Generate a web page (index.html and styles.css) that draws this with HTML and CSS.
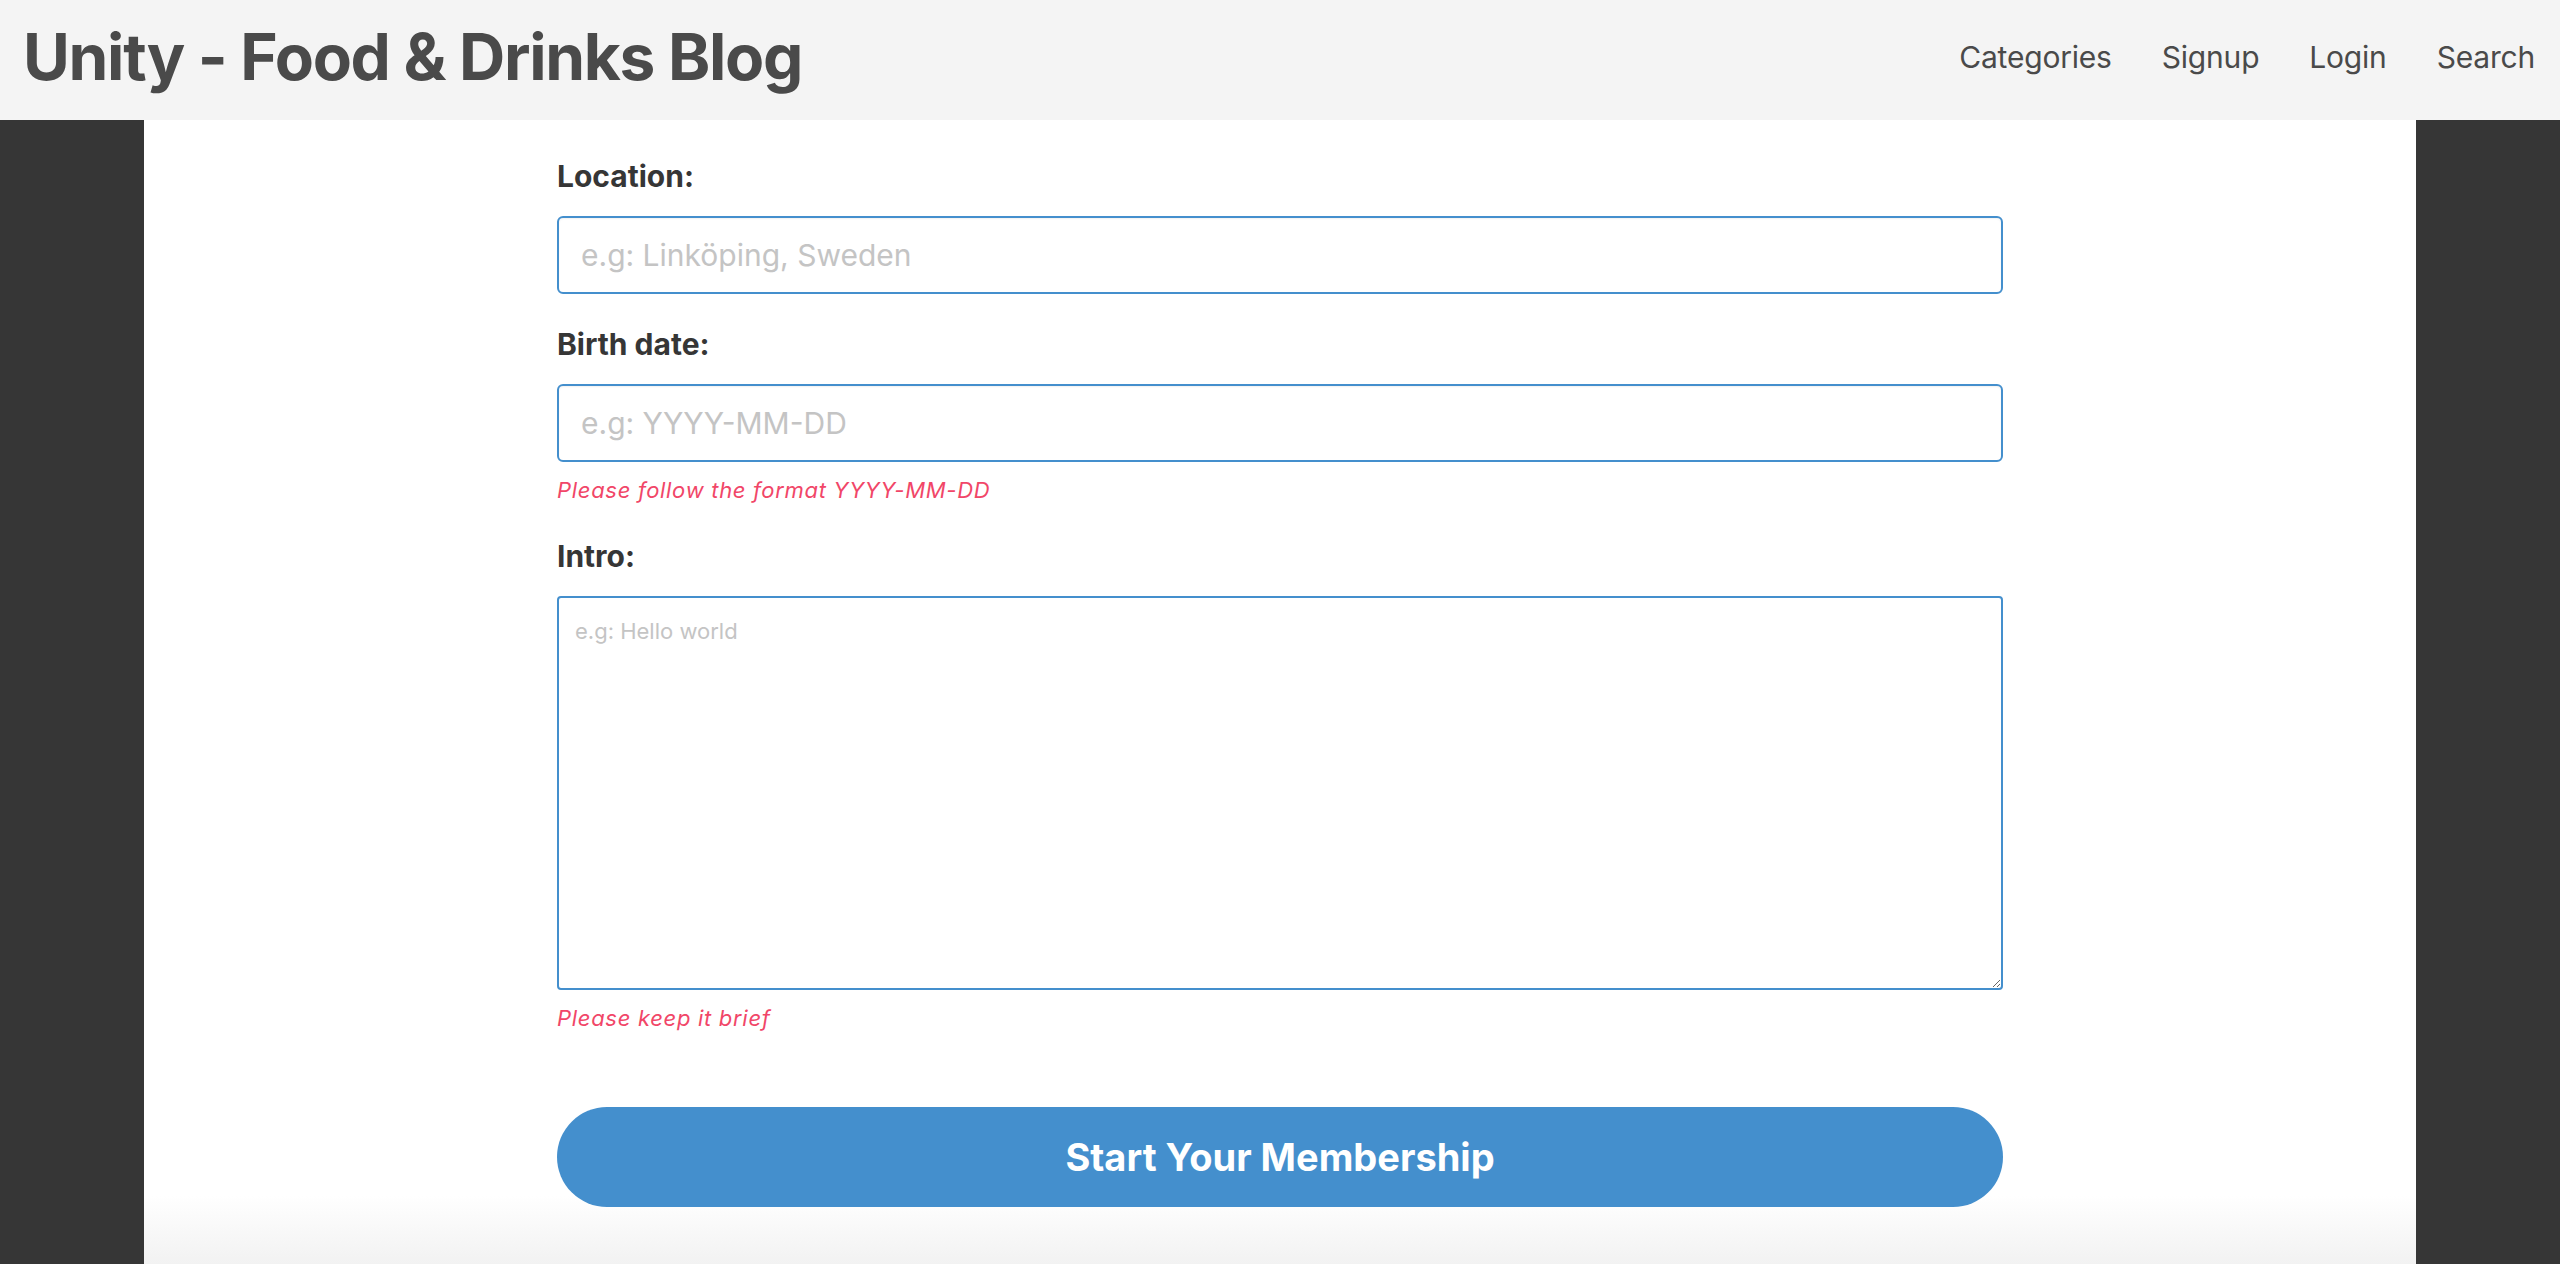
FILE: index.html
```html
<!DOCTYPE html>
<html lang="en">
<head>
<meta charset="utf-8">
<title>Unity - Food &amp; Drinks Blog</title>
<link rel="stylesheet" href="styles.css">
</head>
<body>
<header class="topbar">
  <h1 class="brand">Unity - Food &amp; Drinks Blog</h1>
  <nav class="nav">
    <a class="nav-item" href="#">Categories</a>
    <a class="nav-item" href="#">Signup</a>
    <a class="nav-item" href="#">Login</a>
    <a class="nav-item" href="#">Search</a>
  </nav>
</header>
<div class="page">
  <main class="content">
    <form class="form">
      <div class="field">
        <label class="label">Location:</label>
        <input class="input" type="text" placeholder="e.g: Linköping, Sweden">
      </div>
      <div class="field">
        <label class="label">Birth date:</label>
        <input class="input" type="text" placeholder="e.g: YYYY-MM-DD">
        <p class="help">Please follow the format YYYY-MM-DD</p>
      </div>
      <div class="field">
        <label class="label">Intro:</label>
        <textarea class="textarea" placeholder="e.g: Hello world"></textarea>
        <p class="help">Please keep it brief</p>
      </div>
      <button class="button" type="button">Start Your Membership</button>
    </form>
  </main>
</div>
</body>
</html>
```
FILE: styles.css
```css
* { box-sizing: border-box; }
html, body { margin: 0; padding: 0; }
body {
  font-family: Inter, "Noto Sans", "Liberation Sans", sans-serif;
  background: #363636;
  height: 1264px;
  overflow: hidden;
}
.topbar {
  height: 120px;
  background: #f4f4f4;
  display: flex;
  align-items: center;
  justify-content: space-between;
  padding: 0 25px 6px 23px;
}
.brand {
  margin: 0;
  font-size: 64px;
  line-height: 64px;
  font-weight: 700;
  color: #4a4a4a;
  letter-spacing: -1.3px;
}
.nav {
  display: flex;
  gap: 50px;
}
.nav-item {
  font-size: 30px;
  line-height: 30px;
  color: #4a4a4a;
  text-decoration: none;
  letter-spacing: -0.2px;
}
.page {
  display: flex;
  justify-content: center;
  height: calc(1264px - 120px);
}
.content {
  width: 2272px;
  background: linear-gradient(to bottom, #ffffff 0, #ffffff calc(100% - 68px), #f2f2f2 100%);
  display: flex;
  justify-content: center;
}
.form {
  width: 1446px;
  padding-top: 34px;
  display: flex;
  flex-direction: column;
}
.field { margin-bottom: 27px; }
.field:first-child { margin-bottom: 28px; }
.label {
  display: block;
  font-size: 30px;
  line-height: 45px;
  font-weight: 700;
  color: #363636;
  margin-bottom: 17px;
}
.input {
  display: block;
  width: 100%;
  height: 78px;
  border: 2px solid #448fcd;
  border-radius: 6px;
  padding: 0 22px;
  font-family: Inter, "Noto Sans", "Liberation Sans", sans-serif;
  font-size: 30px;
  color: #363636;
  background: #fff;
  box-shadow: inset 0 1px 2px rgba(10,10,10,0.06);
  outline: none;
}
.input::placeholder, .textarea::placeholder { color: #c4c4c4; }
.textarea {
  display: block;
  width: 100%;
  height: 394px;
  border: 2px solid #448fcd;
  border-radius: 4px;
  padding: 17px 16px;
  font-family: Inter, "Noto Sans", "Liberation Sans", sans-serif;
  font-size: 22px;
  line-height: 33px;
  color: #363636;
  background: #fff;
  outline: none;
}
.help {
  margin: 12px 0 0 0;
  font-size: 22px;
  line-height: 33px;
  font-style: italic;
  color: #f14668;
  letter-spacing: 0.7px;
}
.field:last-of-type { margin-bottom: 72px; }
.button {
  display: block;
  width: 100%;
  height: 100px;
  border: none;
  border-radius: 50px;
  background: #448fcd;
  color: #fff;
  font-family: Inter, "Noto Sans", "Liberation Sans", sans-serif;
  font-size: 38px;
  font-weight: 700;
  cursor: pointer;
}
```
